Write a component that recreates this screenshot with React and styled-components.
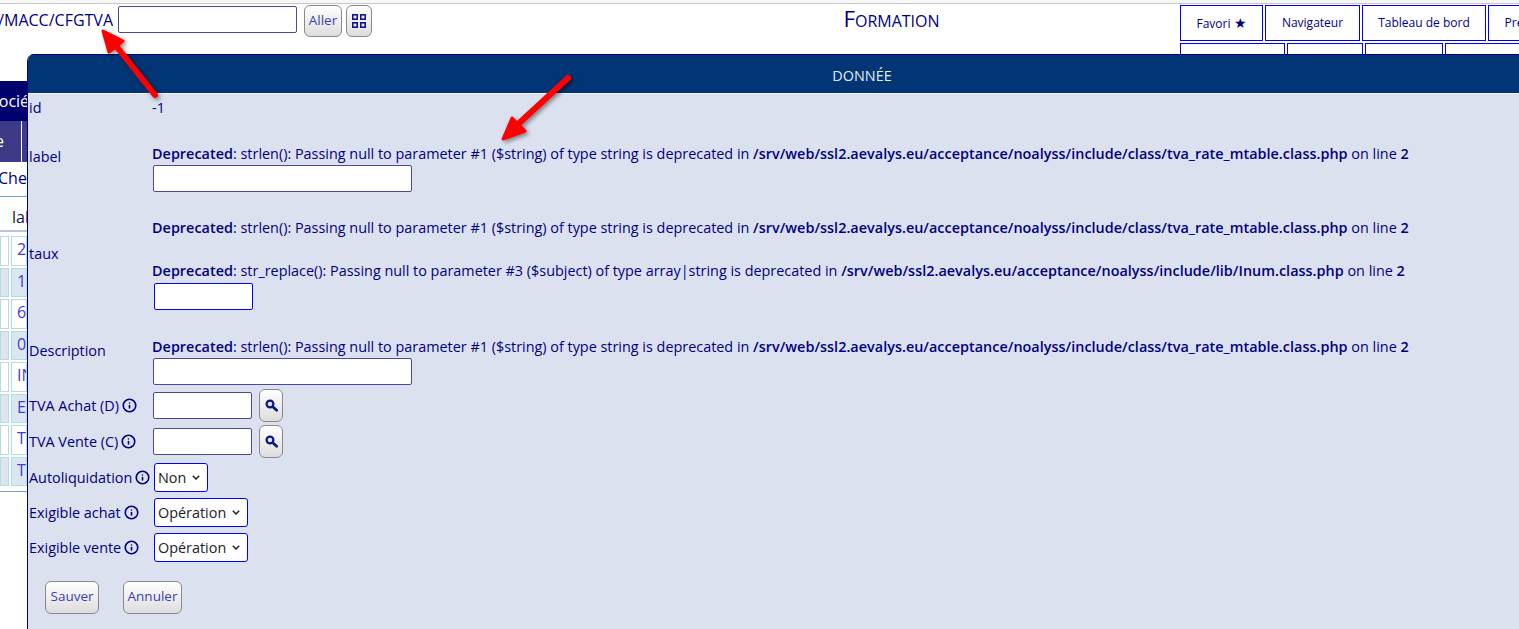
import React from 'react'
import styled, { createGlobalStyle } from 'styled-components'
import { Info } from 'lucide-react'

const GlobalStyle = createGlobalStyle`
    html, body {
        margin: 0;
        padding: 0;
        background: #fff;
    }
    body {
        font-family: "Open Sans", "Liberation Sans", sans-serif;
        font-size: 14.4px;
        color: #000080;
    }
`;

const Page = styled.div`
    position: relative;
    width: 1519px;
    height: 629px;
    overflow: hidden;
`;

const Strip = styled.div`
    height: 3px;
    background: #f7f7f7;
    border-bottom: 1px solid #c8c8c8;
`;

const TopBar = styled.header`
    display: flex;
    height: 77px;
`;

const PathBlock = styled.div`
    display: flex;
    align-items: flex-start;
    width: 603px;
    flex: none;
    padding-top: 1px;
`;

const PathText = styled.div`
    display: flex;
    justify-content: flex-end;
    width: 113px;
    overflow: hidden;
    white-space: nowrap;
    font-size: 16px;
    line-height: 30px;
`;

const PathInput = styled.input`
    box-sizing: border-box;
    width: 179px;
    height: 27px;
    margin: 1px 7px 0 5px;
    border: 1px solid #4a4a96;
    border-radius: 2px;
    background: #fff;
`;

const GradientButton = styled.button`
    box-sizing: border-box;
    padding: 0 0 3px;
    border: 1px solid #8a8a8a;
    border-radius: 6px;
    background: linear-gradient(#ffffff, #dddddd);
    color: #3e3eb0;
    font-family: "Open Sans", sans-serif;
    font-size: 13.5px;
    font-weight: 400;
    display: flex;
    align-items: center;
    justify-content: center;
`;

const AllerButton = styled(GradientButton)`
    width: 38px;
    height: 32px;
`;

const GridButton = styled(GradientButton)`
    width: 26px;
    height: 32px;
    margin-left: 4px;
    padding: 0;
`;

const Title = styled.h1`
    flex: none;
    width: 577px;
    margin: 0;
    text-align: center;
    font-size: 22.4px;
    font-weight: 400;
    font-variant: small-caps;
    line-height: 30px;
`;

const Nav = styled.nav`
    display: flex;
    flex-direction: column;
    gap: 2px;
    flex: none;
    padding-top: 1px;
`;

const NavRow = styled.div`
    display: flex;
    gap: 2px;
`;

const NavItem = styled.a`
    box-sizing: border-box;
    flex: none;
    width: ${p => p.$w}px;
    height: 36px;
    border: 1px solid #0000ff;
    font-size: 12px;
    line-height: 34px;
    text-align: center;
    overflow: hidden;
    white-space: nowrap;
`;

const Star = styled.span`
    font-size: 14px;
`;

const Behind = styled.div`
    width: 27px;
    overflow: hidden;
`;

const CompanyBar = styled.div`
    height: 40px;
    background: #00006e;
    color: #fff;
    font-size: 16px;
    line-height: 41px;
    text-indent: -10px;
    white-space: nowrap;
`;

const TabRow = styled.div`
    display: grid;
    grid-template-columns: 21px 1fr;
    gap: 1px;
    height: 41px;
    background: #fff;
`;

const Tab = styled.div`
    display: flex;
    justify-content: flex-end;
    background: #3d3a87;
    color: #fff;
    font-size: 16px;
    line-height: 40px;
    padding-right: 17px;
`;

const SearchRow = styled.div`
    height: 34px;
    border-bottom: 1px solid #7aa0d0;
    font-size: 16px;
    line-height: 33px;
    text-indent: -2px;
    white-space: nowrap;
`;

const HeadRow = styled.div`
    height: 35px;
    border-bottom: 2px solid #b7c6d8;
    padding-left: 12px;
    box-sizing: border-box;
    color: #14143c;
    font-size: 16px;
    font-weight: 500;
    line-height: 40px;
    margin-bottom: 4px;
`;

const Cells = styled.div`
    display: flex;
    flex-direction: column;
    gap: 2px;
    padding-bottom: 5px;
    border-bottom: 1px solid #7aa0d0;
`;

const Cell = styled.div`
    display: grid;
    grid-template-columns: 9px 1fr;
    gap: 2px;
    height: 29.5px;
`;

const CellBox = styled.div`
    box-sizing: border-box;
    border: 1px solid #b3dbe0;
    background: ${p => (p.$odd ? '#dce6f3' : '#fff')};
    color: #3c3cd0;
    font-size: 16px;
    line-height: 25px;
    padding-left: 5px;
    overflow: hidden;
`;

const Modal = styled.section`
    position: absolute;
    left: 27px;
    top: 54px;
    width: 1668px;
    height: 575px;
    border-left: 1px solid #000080;
    border-top-left-radius: 7px;
    overflow: hidden;
    background: #dce1ef;
`;

const ModalHead = styled.div`
    box-sizing: border-box;
    height: 40px;
    background: #023575;
    border-top: 1px solid #000080;
    border-bottom: 1px solid #f2f4f8;
    color: #e6edf5;
    font-size: 14.4px;
    line-height: 42px;
    text-align: center;
`;

const FormBody = styled.div`
    padding: 3px 0 0 1px;
`;

const Row = styled.div`
    display: grid;
    grid-template-columns: 123px 1fr;
    align-items: center;
    height: ${p => p.$h}px;
    margin-top: ${p => p.$top || 0}px;
`;

const Label = styled.div`
    display: flex;
    align-items: center;
    gap: 3px;
    white-space: nowrap;
    padding-bottom: 1px;
`;

const Value = styled.div`
    display: flex;
    flex-direction: column;
    align-items: flex-start;
`;

const NoticeValue = styled(Value)`
    align-self: stretch;
    justify-content: flex-end;
`;

const Inline = styled.div`
    display: flex;
    align-items: center;
    gap: 7px;
    padding-left: 1px;
`;

const Notice = styled.div`
    height: 22px;
    line-height: 22px;
    margin-bottom: ${p => p.$gap ?? 0}px;
    white-space: nowrap;
    b {
        font-weight: 600;
        letter-spacing: 0.024px;
    }
`;

const TextInput = styled.input`
    box-sizing: border-box;
    flex: none;
    width: ${p => p.$w}px;
    height: 27px;
    margin: 0 0 0 ${p => p.$left ?? 1}px;
    border: 1px solid ${p => (p.$strong ? '#0000ff' : '#4a4a96')};
    border-radius: 2px;
    background: #fff;
`;

const SearchButton = styled(GradientButton)`
    width: 24px;
    height: 33px;
    padding: 0;
`;

const chevron = `url("data:image/svg+xml,%3Csvg xmlns='http://www.w3.org/2000/svg' width='8' height='5'%3E%3Cpath d='M.8.8 4 4 7.2.8' fill='none' stroke='%23222' stroke-width='1.5'/%3E%3C/svg%3E")`

const Select = styled.select`
    box-sizing: border-box;
    appearance: none;
    width: ${p => p.$w}px;
    height: 29px;
    margin-left: 2px;
    padding: 0 0 0 3px;
    border: 1px solid #0000ff;
    border-radius: 3px;
    background: #fff ${chevron} no-repeat right 7px center;
    color: #222;
    font-family: "Open Sans", sans-serif;
    font-size: 14.4px;
`;

const Actions = styled.div`
    display: flex;
    gap: 24px;
    margin: 19px 0 0 16px;
`;

const ActionButton = styled(GradientButton)`
    width: ${p => p.$w}px;
    height: 33px;
`;

const Arrows = styled.svg`
    position: absolute;
    left: 0;
    top: 0;
    filter: drop-shadow(2px 2px 2px rgba(0, 0, 0, 0.45));
    pointer-events: none;
`;

const InfoIcon = () => <Info size={15} strokeWidth={2.6} color="#000080" />

const GridIcon = () => (
    <svg width="14" height="14" viewBox="0 0 14 14" fill="none" stroke="#14148c" strokeWidth="1.6">
        <rect x="0.8" y="0.8" width="4.4" height="4.4" />
        <rect x="8.8" y="0.8" width="4.4" height="4.4" />
        <rect x="0.8" y="8.8" width="4.4" height="4.4" />
        <rect x="8.8" y="8.8" width="4.4" height="4.4" />
    </svg>
)

const SearchIcon = () => (
    <svg width="13" height="13" viewBox="0 0 13 13" fill="none">
        <circle cx="5" cy="5" r="3.4" fill="#dfe6f5" stroke="#0a1a78" strokeWidth="2.2" />
        <path d="M7.8 7.8 L11.6 11.2" stroke="#0a1a78" strokeWidth="2.8" strokeLinecap="round" />
    </svg>
)

const ArrowMarks = () => (
    <Arrows width="1519" height="629" viewBox="0 0 1519 629">
        <g fill="#ff0000" stroke="#ff0000" strokeLinejoin="round" strokeLinecap="round">
            <path d="M155 95 L113 42" strokeWidth="6" fill="none" />
            <polygon points="103,31 123,41 109,52" strokeWidth="3" />
            <path d="M568 78 L516 126" strokeWidth="6" fill="none" />
            <polygon points="503,139 512,118 525,131" strokeWidth="3" />
        </g>
    </Arrows>
)

const rowTexts = ['2', '1', '6', '0', 'IN', 'EX', 'TV', 'T']

const deprecated = (fn, rest, file) => (
    <>
        <b>Deprecated</b>: {fn}: Passing null to parameter {rest} is deprecated in <b>{file}</b> on line <b>2</b>
    </>
)

const MTABLE = '/srv/web/ssl2.aevalys.eu/acceptance/noalyss/include/class/tva_rate_mtable.class.php'
const INUM = '/srv/web/ssl2.aevalys.eu/acceptance/noalyss/include/lib/Inum.class.php'

export default function App() {
    return (
        <Page>
            <GlobalStyle />
            <Strip />
            <TopBar>
                <PathBlock>
                    <PathText>/MACC/CFGTVA</PathText>
                    <PathInput />
                    <AllerButton>Aller</AllerButton>
                    <GridButton><GridIcon /></GridButton>
                </PathBlock>
                <Title>Formation</Title>
                <Nav>
                    <NavRow>
                        <NavItem $w={83}>Favori <Star>★</Star></NavItem>
                        <NavItem $w={95}>Navigateur</NavItem>
                        <NavItem $w={124}>Tableau de bord</NavItem>
                        <NavItem $w={100}>Préférences</NavItem>
                    </NavRow>
                    <NavRow>
                        <NavItem $w={105} />
                        <NavItem $w={76} />
                        <NavItem $w={78} />
                        <NavItem $w={110} />
                    </NavRow>
                </Nav>
            </TopBar>

            <Behind>
                <CompanyBar>Société</CompanyBar>
                <TabRow>
                    <Tab>e</Tab>
                    <Tab />
                </TabRow>
                <SearchRow>Chercher</SearchRow>
                <HeadRow>label</HeadRow>
                <Cells>
                    {rowTexts.map((text, i) => (
                        <Cell key={i}>
                            <CellBox $odd={i % 2 === 1} />
                            <CellBox $odd={i % 2 === 1}>{text}</CellBox>
                        </Cell>
                    ))}
                </Cells>
            </Behind>

            <Modal>
                <ModalHead>DONNÉE</ModalHead>
                <FormBody>
                    <Row $h={21}>
                        <Label>id</Label>
                        <Value>-1</Value>
                    </Row>
                    <Row $h={71} $top={3}>
                        <Label>label</Label>
                        <NoticeValue>
                            <Notice>{deprecated('strlen()', '#1 ($string) of type string', MTABLE)}</Notice>
                            <TextInput $w={259} />
                        </NoticeValue>
                    </Row>
                    <Row $h={113} $top={5}>
                        <Label>taux</Label>
                        <NoticeValue>
                            <Notice $gap={21}>{deprecated('strlen()', '#1 ($string) of type string', MTABLE)}</Notice>
                            <Notice $gap={1}>{deprecated('str_replace()', '#3 ($subject) of type array|string', INUM)}</Notice>
                            <TextInput $w={99} $left={2} $strong />
                        </NoticeValue>
                    </Row>
                    <Row $h={68} $top={7}>
                        <Label>Description</Label>
                        <NoticeValue>
                            <Notice>{deprecated('strlen()', '#1 ($string) of type string', MTABLE)}</Notice>
                            <TextInput $w={259} />
                        </NoticeValue>
                    </Row>
                    <Row $h={33} $top={4}>
                        <Label>TVA Achat (D) <InfoIcon /></Label>
                        <Inline>
                            <TextInput $w={99} $left={0} />
                            <SearchButton><SearchIcon /></SearchButton>
                        </Inline>
                    </Row>
                    <Row $h={33} $top={3}>
                        <Label>TVA Vente (C) <InfoIcon /></Label>
                        <Inline>
                            <TextInput $w={99} $left={0} />
                            <SearchButton><SearchIcon /></SearchButton>
                        </Inline>
                    </Row>
                    <Row $h={29} $top={5}>
                        <Label>Autoliquidation <InfoIcon /></Label>
                        <Value><Select $w={54}><option>Non</option></Select></Value>
                    </Row>
                    <Row $h={29} $top={6}>
                        <Label>Exigible achat <InfoIcon /></Label>
                        <Value><Select $w={94}><option>Opération</option></Select></Value>
                    </Row>
                    <Row $h={29} $top={6}>
                        <Label>Exigible vente <InfoIcon /></Label>
                        <Value><Select $w={94}><option>Opération</option></Select></Value>
                    </Row>
                    <Actions>
                        <ActionButton $w={54}>Sauver</ActionButton>
                        <ActionButton $w={59}>Annuler</ActionButton>
                    </Actions>
                </FormBody>
            </Modal>
            <ArrowMarks />
        </Page>
    )
}
